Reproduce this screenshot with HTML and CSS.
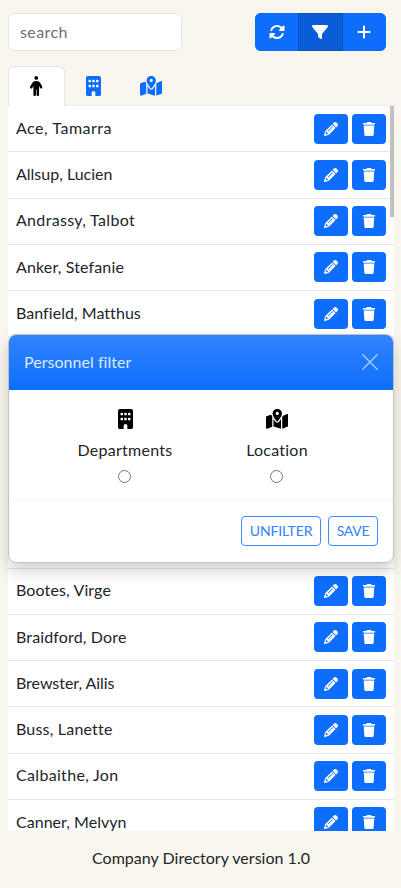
FILE: index.html
```html
<!DOCTYPE html>
<html lang="en">
<head>
<meta charset="utf-8">
<meta name="viewport" content="width=device-width, initial-scale=1">
<title>Company Directory</title>
<link rel="stylesheet" href="styles.css">
</head>
<body>
<svg class="sprite" aria-hidden="true">
  <symbol id="rotate" viewBox="0 0 512 512"><path d="M142.9 142.9c62.2-62.2 162.7-62.5 225.3-1L327 183c-6.9 6.9-8.9 17.2-5.2 26.2s12.5 14.8 22.2 14.8H472c13.3 0 24-10.7 24-24V72c0-9.7-5.8-18.5-14.8-22.2s-19.3-1.7-26.2 5.2L413.4 96.6c-87.6-86.5-228.7-86.2-315.8 1C73.2 122 55.6 150.7 44.8 181.4c-5.9 16.7 2.9 34.9 19.5 40.8s34.9-2.9 40.8-19.5c7.7-21.8 20.2-42.3 37.8-59.8zM16 312V440c0 9.7 5.8 18.5 14.8 22.2s19.3 1.7 26.2-5.2l41.6-41.6c87.6 86.5 228.7 86.2 315.8-1c24.4-24.4 42.1-53.1 52.9-83.7c5.9-16.7-2.9-34.9-19.5-40.8s-34.9 2.9-40.8 19.5c-7.7 21.8-20.2 42.3-37.8 59.8c-62.2 62.2-162.7 62.5-225.3 1L185 329c6.9-6.9 8.9-17.2 5.2-26.2s-12.5-14.8-22.2-14.8H40c-13.3 0-24 10.7-24 24z"/></symbol>
  <symbol id="filter" viewBox="0 0 512 512"><path d="M3.9 54.9C10.5 40.9 24.5 32 40 32H472c15.5 0 29.5 8.9 36.1 22.9s4.6 30.5-5.2 42.5L320 320.9V448c0 12.1-6.8 23.2-17.7 28.6s-23.8 4.3-33.5-3l-64-48c-8.1-6-12.8-15.5-12.8-25.6V320.9L9 97.3C-.7 85.4-2.8 68.8 3.9 54.9z"/></symbol>
  <symbol id="plus" viewBox="0 0 448 512"><path d="M256 80c0-17.7-14.3-32-32-32s-32 14.3-32 32V224H48c-17.7 0-32 14.3-32 32s14.3 32 32 32H192V432c0 17.7 14.3 32 32 32s32-14.3 32-32V288H400c17.7 0 32-14.3 32-32s-14.3-32-32-32H256V80z"/></symbol>
  <symbol id="person" viewBox="0 0 320 512"><path d="M112 48a48 48 0 1 1 96 0 48 48 0 1 1 -96 0zm40 304V480c0 17.7-14.3 32-32 32s-32-14.3-32-32V256.9L59.4 304.5c-9.1 15.1-28.8 20-43.9 10.9s-20-28.8-10.9-43.9l58.3-97c17.4-28.9 48.6-46.6 82.3-46.6h29.7c33.7 0 64.9 17.7 82.3 46.6l58.3 97c9.1 15.1 4.2 34.8-10.9 43.9s-34.8 4.2-43.9-10.9L232 256.9V480c0 17.7-14.3 32-32 32s-32-14.3-32-32V352H152z"/></symbol>
  <symbol id="building" viewBox="0 0 384 512"><path fill-rule="evenodd" d="M48 0C21.5 0 0 21.5 0 48V464c0 26.5 21.5 48 48 48h96V432c0-26.5 21.5-48 48-48s48 21.5 48 48v80h96c26.5 0 48-21.5 48-48V48c0-26.5-21.5-48-48-48H48zM80 96h32q16 0 16 16v32q0 16-16 16H80q-16 0-16-16v-32q0-16 16-16zM176 96h32q16 0 16 16v32q0 16-16 16h-32q-16 0-16-16v-32q0-16 16-16zM272 96h32q16 0 16 16v32q0 16-16 16h-32q-16 0-16-16v-32q0-16 16-16zM80 224h32q16 0 16 16v32q0 16-16 16H80q-16 0-16-16v-32q0-16 16-16zM176 224h32q16 0 16 16v32q0 16-16 16h-32q-16 0-16-16v-32q0-16 16-16zM272 224h32q16 0 16 16v32q0 16-16 16h-32q-16 0-16-16v-32q0-16 16-16z"/></symbol>
  <symbol id="map" viewBox="0 0 576 512"><path fill-rule="evenodd" d="M408 120c0 54.6-73.1 151.9-105.2 192c-7.7 9.6-22 9.6-29.6 0C241.1 271.9 168 174.6 168 120C168 53.7 221.7 0 288 0s120 53.7 120 120zm8 80.4c3.5-6.9 6.7-13.8 9.6-20.6c.5-1.2 1-2.5 1.5-3.7l116-46.4C558.9 123.4 576 135 576 152V422.8c0 9.8-6 18.6-15.1 22.3L416 503V200.4zM137.6 138.3c2.4 14.1 7.2 28.3 12.8 41.5c2.9 6.8 6.1 13.7 9.6 20.6V451.8L32.9 502.7C17.1 509 0 497.4 0 480.4V209.6c0-9.8 6-18.6 15.1-22.3l122.6-49zM327.8 332c13.9-17.4 35.7-45.7 56.2-77V504.3L192 449.4V255c20.5 31.3 42.3 59.6 56.2 77c20.5 25.6 59.1 25.6 79.6 0zM288 152a40 40 0 1 0 0-80 40 40 0 1 0 0 80z"/></symbol>
  <symbol id="pencil" viewBox="0 0 512 512"><path d="M410.3 231l11.3-11.3-33.9-33.9-62.1-62.1L291.7 89.8l-11.3 11.3-22.6 22.6L58.6 322.9c-10.4 10.4-18 23.3-22.2 37.4L1 480.7c-2.5 8.4-.2 17.5 6.1 23.7s15.3 8.5 23.7 6.1l120.3-35.4c14.1-4.2 27-11.8 37.4-22.2L387.7 253.7 410.3 231zM160 399.4l-9.1 22.7c-4 3.1-8.5 5.4-13.3 6.9L59.4 452l23-78.1c1.4-4.9 3.8-9.4 6.9-13.3l22.7-9.1v32c0 8.8 7.2 16 16 16h32zM362.7 18.7L348.3 33.2 325.7 55.8 314.3 67.1l33.9 33.9 62.1 62.1 33.9 33.9 11.3-11.3 22.6-22.6 14.5-14.5c25-25 25-65.5 0-90.5L453.3 18.7c-25-25-65.5-25-90.5 0zm-47.4 168l-144 144c-6.2 6.2-16.4 6.2-22.6 0s-6.2-16.4 0-22.6l144-144c6.2-6.2 16.4-6.2 22.6 0s6.2 16.4 0 22.6z"/></symbol>
  <symbol id="trash" viewBox="0 0 448 512"><path d="M135.2 17.7L128 32H32C14.3 32 0 46.3 0 64S14.3 96 32 96H416c17.7 0 32-14.3 32-32s-14.3-32-32-32H320l-7.2-14.3C307.4 6.8 296.3 0 284.2 0H163.8c-12.1 0-23.2 6.8-28.6 17.7zM416 128H32L53.2 467c1.6 25.3 22.6 45 47.9 45H346.9c25.3 0 46.3-19.7 47.9-45L416 128z"/></symbol>
</svg>

<header class="toolbar">
  <input class="search" type="text" placeholder="search" aria-label="search">
  <div class="btn-group">
    <button class="tool" aria-label="Refresh"><svg class="icon"><use href="#rotate"/></svg></button>
    <button class="tool tool-active" aria-label="Filter"><svg class="icon"><use href="#filter"/></svg></button>
    <button class="tool" aria-label="Add"><svg class="icon icon-plus"><use href="#plus"/></svg></button>
  </div>
</header>

<nav class="tabs">
  <button class="tab tab-active" aria-label="Personnel"><svg class="icon-person"><use href="#person"/></svg></button>
  <button class="tab" aria-label="Departments"><svg class="icon-building"><use href="#building"/></svg></button>
  <button class="tab tab-map" aria-label="Locations"><svg class="icon-map"><use href="#map"/></svg></button>
</nav>

<main class="list" id="list"></main>
<div class="scroll-thumb"></div>

<footer class="footer"><span data-width="218">Company Directory version 1.0</span></footer>

<section class="modal" role="dialog" aria-label="Personnel filter">
  <div class="modal-header">
    <span data-width="107">Personnel filter</span>
    <svg class="close" viewBox="0 0 16 16"><path d="M.8.8l14.4 14.4M15.2.8L.8 15.2"/></svg>
  </div>
  <div class="modal-body">
    <label class="option"><svg class="icon-building"><use href="#building"/></svg><span class="option-name" data-width="95">Departments</span><input class="radio" type="radio" name="filter"></label>
    <label class="option"><svg class="icon-map"><use href="#map"/></svg><span class="option-name" data-width="62">Location</span><input class="radio" type="radio" name="filter"></label>
  </div>
  <div class="modal-footer">
    <button class="outline outline-wide"><span data-width="62.5">UNFILTER</span></button>
    <button class="outline"><span data-width="32.5">SAVE</span></button>
  </div>
</section>
<script src="script.js"></script>
</body>
</html>
```

FILE: styles.css
```css
* { box-sizing: border-box; }

body {
  margin: 0;
  height: 888px;
  overflow: hidden;
  padding: 13px 7px 0 8px;
  background: #f9f6ed;
  color: #212529;
  font: 400 16px/24px Lato, "Open Sans", sans-serif;
}

button, input { font: inherit; }
svg { display: block; fill: currentColor; }
.sprite { position: absolute; width: 0; height: 0; }
[data-width] { display: inline-block; white-space: nowrap; }

.toolbar { display: flex; justify-content: space-between; height: 38px; padding-right: 8px; }

.search {
  width: 174px;
  height: 37.5px;
  padding: 5px 11px 6px;
  border: 1px solid #e3e5e8;
  border-radius: 6px;
  background: #fff;
}
.search::placeholder { color: #6c7074; opacity: 1; letter-spacing: .4px; }

.btn-group { display: flex; width: 131px; height: 37.5px; border-radius: 6px; overflow: hidden; background: #0d6efd; }
.tool {
  display: grid;
  place-items: center;
  width: 43px;
  padding: 0;
  border: 0;
  background: #0d6efd;
  color: #fff;
}
.tool:last-child { padding-right: 2px; }
.tool-active { width: 45px; padding-right: 1px; background: #0a5cd7; border: 1px solid #0a53be; }
.icon { width: 16px; height: 16px; }
.icon-plus { width: 14px; }

.tabs { position: relative; z-index: 1; display: flex; height: 40px; margin-top: 15px; }
.tab {
  display: grid;
  place-items: center;
  width: 57px;
  height: 40px;
  padding: 0 0 2px;
  border: 1px solid transparent;
  border-bottom: 0;
  border-radius: 6px 6px 0 0;
  background: transparent;
  color: #0d6efd;
}
.tab-map { width: 58px; }
.tab-active { border-color: #e3e5e8; background: #fff; color: #000; }
.icon-person { width: 12.5px; height: 20px; }
.icon-building { width: 15px; height: 20px; }
.icon-map { width: 22.5px; height: 20px; }

.list { height: 725px; overflow: hidden; background: #fff; box-shadow: 0 -1px #e9eaec; }
.row {
  display: flex;
  align-items: center;
  gap: 4px;
  height: 46.25px;
  padding: 0 8px;
  border-bottom: 1px solid #e3e5e8;
}
.row-name { flex: 1; padding-bottom: 1.5px; }
.action {
  display: grid;
  place-items: center;
  width: 34.25px;
  height: 30px;
  padding: 0;
  border: 0;
  border-radius: 4px;
  background: #0d6efd;
  color: #fff;
}
.icon-sm { width: 14px; height: 14px; }

.scroll-thumb { position: absolute; top: 106px; left: 390px; width: 4px; height: 111px; background: #c1c1c1; }

.footer { padding-top: 15px; text-align: center; }

.modal {
  position: absolute;
  top: 334px;
  left: 8px;
  width: 386px;
  height: 229px;
  border: 1px solid #bfc1c5;
  border-radius: 8px;
  background: #fff;
  box-shadow: 0 8px 16px rgba(0, 0, 0, .18);
  overflow: hidden;
}
.modal-header {
  display: flex;
  align-items: center;
  justify-content: space-between;
  height: 55px;
  padding: 0 15px 1px;
  background: linear-gradient(#3184fd, #0d6efd);
  color: #dceaff;
}
.close { width: 16px; height: 16px; fill: none; stroke: #a9ccff; stroke-width: 1.4; stroke-linecap: round; }
.modal-body { display: flex; height: 110px; padding: 19px 40px 0; border-bottom: 1px solid #f6f6f7; }
.option { display: flex; flex: 1; flex-direction: column; align-items: center; color: #000; }
.option-name { margin-top: 9px; color: #212529; }
.radio { width: 13px; height: 13px; margin: 8px 1px 0 0; }
.modal-footer { display: flex; justify-content: flex-end; gap: 7px; padding: 16px 15px; }
.outline {
  width: 50px;
  height: 30px;
  padding: 0 0 2px;
  border: 1px solid #3d8bfd;
  border-radius: 4px;
  background: #fff;
  color: #3182fd;
  font-size: 14px;
  line-height: 21px;
}
.outline-wide { width: 80px; }
```

FILE: script.js
```js
// Each entry is [name, label width in px]; rows without data stay blank.
const people = [
  ["Ace, Tamarra", 96], ["Allsup, Lucien", 96.5], ["Andrassy, Talbot", 119],
  ["Anker, Stefanie", 108], ["Banfield, Matthus", 124],
  null, null, null, null, null,
  ["Bootes, Virge", 95], ["Braidford, Dore", 110.5], ["Brewster, Ailis", 98.5],
  ["Buss, Lanette", 96], ["Calbaithe, Jon", 102.5], ["Canner, Melvyn", 110.5]
];

const action = (icon, label) =>
  `<button class="action" aria-label="${label}"><svg class="icon-sm"><use href="#${icon}"/></svg></button>`;

document.getElementById("list").innerHTML = people.map(person => person
  ? `<div class="row"><div class="row-name"><span data-width="${person[1]}">${person[0]}</span></div>${action("pencil", "Edit")}${action("trash", "Delete")}</div>`
  : `<div class="row"></div>`).join("");

// Track each label so that it fills its set width.
document.querySelectorAll("[data-width]").forEach(label => {
  const spare = Number(label.dataset.width) - label.getBoundingClientRect().width;
  label.style.letterSpacing = `${spare / label.textContent.length}px`;
});
```
